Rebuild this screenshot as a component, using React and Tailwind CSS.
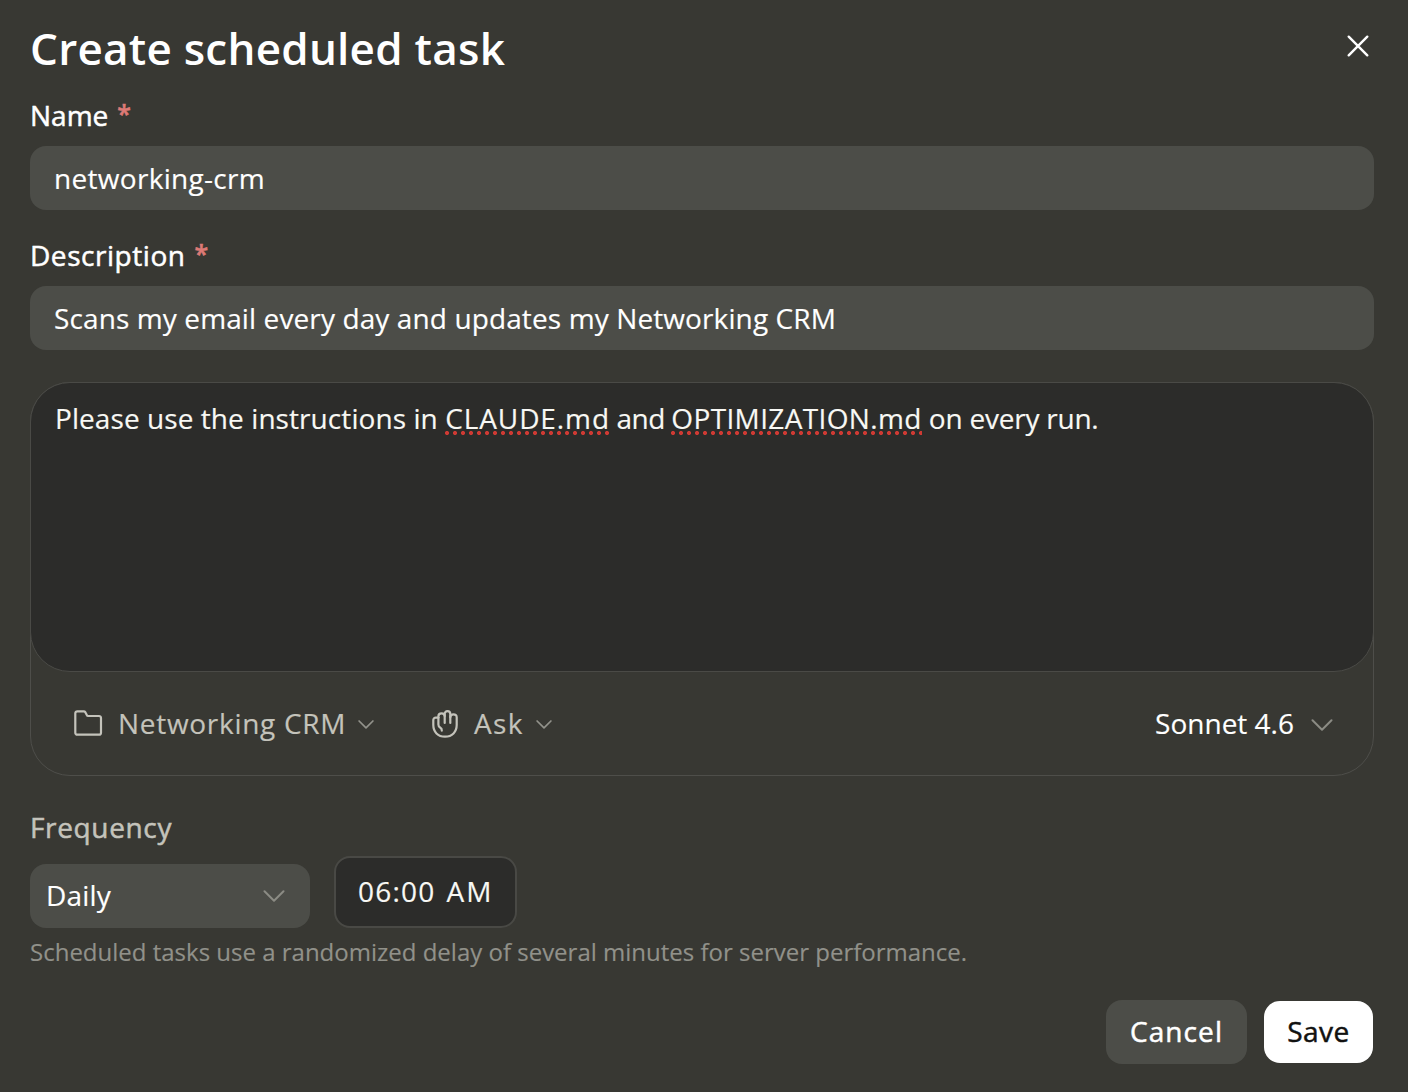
import React, { useState } from 'react';

const Chevron = ({ className }) => (
  <svg viewBox="0 0 22 12" fill="none" stroke="currentColor" strokeLinecap="round" strokeLinejoin="round" className={className}>
    <path d="M1.5 1.2 L11 10.7 L20.5 1.2" vectorEffect="non-scaling-stroke" />
  </svg>
);

const FolderIcon = () => (
  <svg width="30" height="28" viewBox="0 0 30 28" fill="none" stroke="currentColor" strokeWidth="2.2" strokeLinejoin="round" className="mt-[2px]">
    <path d="M2.3 3.3a2 2 0 0 1 2-2h6.3a2 2 0 0 1 1.7.9l1.5 2.9a1.5 1.5 0 0 0 1.3.9H26a2 2 0 0 1 2 2v14.7a2 2 0 0 1-2 2H4.3a2 2 0 0 1-2-2z" />
  </svg>
);

const HandIcon = () => (
  <svg width="28" height="30" viewBox="0 0 28 30" fill="none" stroke="currentColor" strokeWidth="2.2" strokeLinecap="round" strokeLinejoin="round" className="mt-[2px]">
    <path d="M7.6 8.6H4.8a2.5 2.5 0 0 0-2.5 2.5v5c0 6.9 4.6 11.6 11.7 11.6s11.7-4.7 11.7-11.6V8.3c0-1.9-1.2-3-3.2-3s-3.2 1-3.2 3" />
    <path d="M10.8 21.6c.2-1.6-.3-2.3-1.7-3.1-1.2-.7-1.7-1.5-1.7-2.9V7.3c0-1.8 1.2-2.9 3.2-2.9s3.100 1.100 3.100 2.900V14" />
    <path d="M13.7 7V5c0-1.800 1-2.800 2.800-2.800s2.800 1 2.800 2.800v9" />
  </svg>
);

const Required = () => <span className="mb-1 ml-[9px] text-[25px] font-semibold text-[#dd7a76]">*</span>;

const Misspelled = ({ children, className }) => (
  <span className={`bg-[radial-gradient(circle,#cf3a33_1.8px,transparent_2.3px)] bg-[length:8px_4px] bg-[position:left_-2px_bottom_3px] bg-repeat-x pb-px ${className}`}>
    {children}
  </span>
);

const App = () => {
  const [name, setName] = useState('networking-crm');
  const [description, setDescription] = useState('Scans my email every day and updates my Networking CRM');

  return (
    <div className="flex h-[1092px] w-[1408px] flex-col bg-[#383833] pr-[34px] pl-[30px] font-['Open_Sans',sans-serif] text-[28px] leading-[40px] text-white [-webkit-text-stroke:0.15px]">
      {/* Header */}
      <header className="flex h-24 items-center justify-between">
        <h2 className="text-[44px] leading-[56px] font-semibold tracking-[0.25px] [-webkit-text-stroke:0px]">Create scheduled task</h2>
        <button className="mr-[5px] mb-1 block">
          <svg width="22" height="22" viewBox="0 0 22 22" fill="none" stroke="currentColor" strokeWidth="2.4" strokeLinecap="round">
            <path d="M1.7 1.7 L20.3 20.3 M20.3 1.7 L1.7 20.3" />
          </svg>
        </button>
      </header>

      {/* Text fields */}
      <label className="flex h-[50px] items-center pb-3 [-webkit-text-stroke:0.5px]">
        <span>Name</span>
        <Required />
      </label>
      <input
        value={name}
        onChange={(e) => setName(e.target.value)}
        spellCheck={false}
        className="h-16 rounded-2xl bg-[#4c4d48] px-6 tracking-[0.3px] outline-none"
      />
      <label className="mt-[26px] flex h-[50px] items-center pb-3 [-webkit-text-stroke:0.5px]">
        <span className="tracking-[0.55px]">Description</span>
        <Required />
      </label>
      <input
        value={description}
        onChange={(e) => setDescription(e.target.value)}
        spellCheck={false}
        className="h-16 rounded-2xl bg-[#4c4d48] px-6 tracking-[0.11px] outline-none"
      />

      {/* Prompt editor */}
      <section className="mt-8 h-[394px] rounded-[40px] border border-[#4e4e4a]">
        <div className="-mx-px -mt-px h-[290px] rounded-[40px] border border-[#4a4a46] bg-[#2c2c2a] px-6 pt-[15px] text-[#f8f8f4]">
          <span className="tracking-[0.07px]">Please use the instructions in </span>
          <Misspelled className="tracking-[0.9px]">CLAUDE.md</Misspelled>
          <span className="tracking-[-0.6px]"> and </span>
          <Misspelled className="tracking-[0.35px]">OPTIMIZATION.md</Misspelled>
          <span className="tracking-[-0.22px]"> on every run.</span>
        </div>
        <div className="flex h-[104px] items-center pr-[40px] pb-[2px] pl-[42px] text-[#c4c3bb]">
          <button className="flex items-center">
            <FolderIcon />
            <span className="ml-[15px] tracking-[0.7px]">Networking CRM</span>
            <Chevron className="mt-[3px] ml-3 h-[9px] w-4 stroke-[1.7] text-[#92928b]" />
          </button>
          <button className="ml-[57px] flex items-center">
            <HandIcon />
            <span className="ml-[15px] tracking-[1.3px]">Ask</span>
            <Chevron className="mt-[3px] ml-3 h-[9px] w-4 stroke-[1.7] text-[#92928b]" />
          </button>
          <button className="ml-auto flex items-center text-white">
            <span>Sonnet 4.6</span>
            <Chevron className="mt-[3px] ml-[17px] h-3 w-[22px] stroke-2 text-[#8b8b84]" />
          </button>
        </div>
      </section>

      {/* Schedule */}
      <div className="mt-[31px] tracking-[0.65px] text-[#c4c3bb] [-webkit-text-stroke:0.5px]">Frequency</div>
      <div className="mt-[9px] flex items-end gap-6">
        <button className="flex h-16 w-[280px] items-center justify-between rounded-2xl bg-[#4c4d48] pr-[25px] pl-4">
          <span className="pb-[2px] tracking-[0.2px]">Daily</span>
          <Chevron className="h-3 w-[22px] stroke-2 text-[#8b8b84]" />
        </button>
        <div className="flex h-[72px] w-[183px] items-center rounded-2xl border-2 border-[#494945] bg-[#2c2c2a] pb-[2px] pl-[22px] text-[#f8f8f4]">
          <span className="tracking-[1.2px]">06:00</span>
          <span className="ml-[11px] tracking-[2.2px]">AM</span>
        </div>
      </div>
      <p className="mt-2 text-[24px] leading-8 text-[#91918a]">
        Scheduled tasks use a randomized delay of several minutes for server performance.
      </p>

      {/* Actions */}
      <footer className="mt-8 flex items-center justify-end gap-[17px] [-webkit-text-stroke:0.5px]">
        <button className="h-16 w-[141px] rounded-2xl bg-[#4c4d48] pb-[2px] tracking-[1.1px]">Cancel</button>
        <button className="mr-px h-[62px] w-[109px] rounded-2xl bg-white pb-[2px] tracking-[0.5px] text-[#111110]">Save</button>
      </footer>
    </div>
  );
};

export default App;
